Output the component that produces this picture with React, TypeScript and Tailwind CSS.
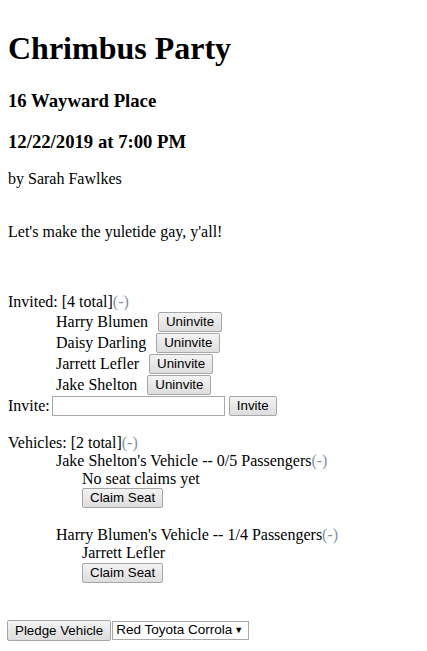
import React from 'react'

const GUESTS = ['Harry Blumen', 'Daisy Darling', 'Jarrett Lefler', 'Jake Shelton']

const VEHICLES = [
  { owner: 'Jake Shelton', taken: 0, seats: 5, riders: [] as string[] },
  { owner: 'Harry Blumen', taken: 1, seats: 4, riders: ['Jarrett Lefler'] },
]

function Btn({ children, className = '' }: { children: React.ReactNode; className?: string }) {
  return (
    <button
      className={
        'h-[20px] px-[7px] border border-[#a6a6a6] rounded-[2px] bg-gradient-to-b from-[#f3f3f3] to-[#dddddd] text-[13.33px] leading-[16px] text-black whitespace-nowrap font-["Liberation_Sans",Arial,sans-serif] ' +
        className
      }
    >
      {children}
    </button>
  )
}

const Minus = () => <span className="text-[#8390a8]">(-)</span>

export default function App() {
  return (
    <div className='px-2 text-[16px] text-black font-["Liberation_Serif","Times_New_Roman",serif]'>
      <h1 className="mt-[30px] text-[32px] leading-[37px] font-bold">Chrimbus Party</h1>
      <h3 className="mt-[23px] text-[18.72px] leading-[22px] font-bold">16 Wayward Place</h3>
      <h3 className="mt-[19px] text-[18.72px] leading-[22px] font-bold">12/22/2019 at 7:00 PM</h3>
      <p className="mt-[17px] leading-[18px]">by Sarah Fawlkes</p>
      <p className="mt-[35px] leading-[18px]">Let's make the yuletide gay, y'all!</p>

      <div className="mt-[52px] leading-[18px]">
        Invited: [4 total]<Minus />
      </div>
      <div className="ml-[48px]">
        {GUESTS.map(g => (
          <div key={g} className="h-[21px] flex items-center leading-[18px]">
            <span>{g}</span>
            <Btn className="ml-[10px]">Uninvite</Btn>
          </div>
        ))}
      </div>
      <div className="h-[21px] flex items-center leading-[18px]">
        <span>Invite:</span>
        <input className="ml-[2px] w-[173px] h-[20px] border border-[#a9a9a9] bg-white" />
        <Btn className="ml-[4px]">Invite</Btn>
      </div>

      <div className="mt-[18px] leading-[18px]">
        Vehicles: [2 total]<Minus />
      </div>
      <div className="ml-[48px] leading-[18px]">
        {VEHICLES.map((v, i) => (
          <div key={v.owner} className={i > 0 ? 'mt-[18px]' : ''}>
            <div>
              {v.owner}'s Vehicle -- {v.taken}/{v.seats} Passengers<Minus />
            </div>
            <div className="ml-[26px]">
              {v.riders.length === 0 ? <div>No seat claims yet</div> : v.riders.map(r => <div key={r}>{r}</div>)}
              <Btn className={'block ' + (i > 0 ? 'mt-[1px]' : '')}>Claim Seat</Btn>
            </div>
          </div>
        ))}
      </div>

      <div className="mt-[37px] -ml-px flex items-center">
        <Btn className="h-[21px]">Pledge Vehicle</Btn>
        <div className='ml-[1px] h-[19px] w-[137px] border border-[#a9a9a9] bg-white flex items-center justify-between pl-[3px] pr-[5px] text-[13.5px] font-["Liberation_Sans",Arial,sans-serif]'>
          <span>Red Toyota Corrola</span>
          <span className="text-[9px]">▼</span>
        </div>
      </div>
    </div>
  )
}
